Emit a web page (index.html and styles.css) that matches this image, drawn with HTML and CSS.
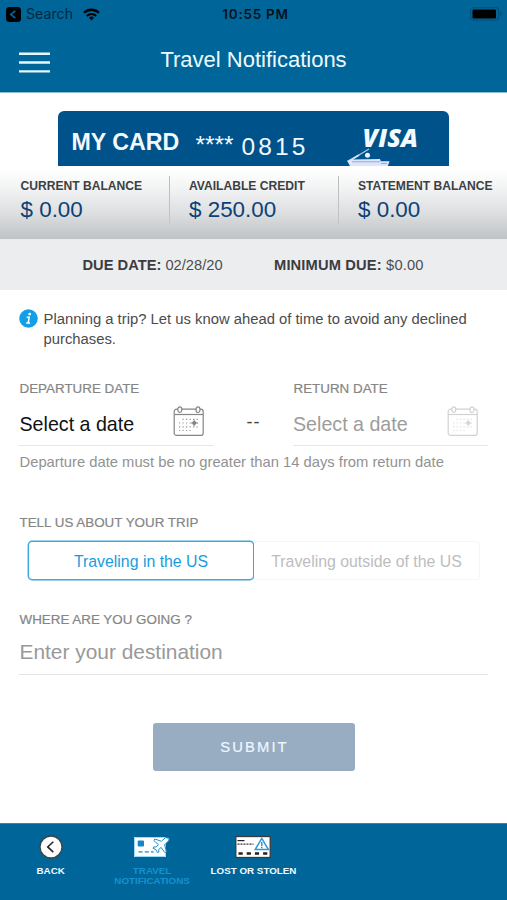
FILE: index.html
```html
<!DOCTYPE html>
<html lang="en">
<head>
<meta charset="utf-8">
<title>Travel Notifications</title>
<link rel="stylesheet" href="styles.css">
</head>
<body>
<div class="app">
  <header class="header">
    <div class="status">
      <div class="status-left">
        <svg width="15" height="15" viewBox="0 0 15 15"><rect width="15" height="15" rx="3.5" fill="#000"/><path d="M9.3 3.8 4.8 7.5l4.5 3.7" fill="none" stroke="#0a6298" stroke-width="1.7"/></svg>
        <span class="search">Search</span>
        <svg width="17" height="13" viewBox="0 0 17 13" fill="none" stroke="#000"><path d="M1 4.8a10.7 10.7 0 0 1 15 0" stroke-width="2.3"/><path d="M3.8 7.9a6.7 6.7 0 0 1 9.4 0" stroke-width="2.1"/><path d="m8.5 12.4 2.5-2.6a3.5 3.5 0 0 0-5 0z" fill="#000" stroke="none"/></svg>
      </div>
      <span class="time">10:55 PM</span>
      <svg class="battery" width="32" height="14" viewBox="0 0 32 14"><rect x=".6" y=".6" width="28" height="12.6" rx="3" fill="none" stroke="#04507d" stroke-width="1.2"/><rect x="2.5" y="2.6" width="23.5" height="8.8" rx="1.2" fill="#000"/><path d="M30 4.5c2 .8 2 4.2 0 5z" fill="#04507d"/></svg>
    </div>
    <div class="nav">
      <svg class="menu" width="31" height="22" viewBox="0 0 31 22" stroke="#e6f8ff" stroke-width="2.4"><path d="M0 1.8h31M0 10.5h31M0 19.4h31"/></svg>
      <h1 class="title">Travel Notifications</h1>
    </div>
  </header>

  <section class="card-area">
    <div class="card">
      <span class="card-name">MY CARD</span>
      <span class="card-mask">****</span>
      <span class="card-digits">0815</span>
      <div class="card-brand">
        <span class="visa">VISA</span>
        <svg class="boat" width="46" height="19" viewBox="0 0 46 19"><path d="m2 14 20-12" stroke="#a9cce9" stroke-width="1.3"/><path d="m2 14 10-6" stroke="#d5e5f5" stroke-width="1.8"/><circle cx="20.5" cy="8.3" r="2.5" fill="#eef5ff"/><path d="M0 13.8 3 12.4l30-.3.8 2.2h8.8l-1.8 4.7H3z" fill="#dce5fb"/><path d="M5 14.8h28M34 16.5h6" stroke="#8caed6"/></svg>
      </div>
    </div>
  </section>

  <section class="balances">
    <div class="balance"><div class="balance-label">CURRENT BALANCE</div><div class="amount">$ 0.00</div></div>
    <div class="balance"><div class="balance-label">AVAILABLE CREDIT</div><div class="amount">$ 250.00</div></div>
    <div class="balance"><div class="balance-label">STATEMENT BALANCE</div><div class="amount">$ 0.00</div></div>
  </section>
  <section class="due">
    <div class="due-date"><b>DUE DATE:</b> 02/28/20</div>
    <div class="due-min"><b>MINIMUM DUE:</b> $0.00</div>
  </section>

  <main class="form">
    <div class="info">
      <svg width="19" height="19" viewBox="0 0 19 19"><circle cx="9.5" cy="9.5" r="9.3" fill="#139fe5"/><g transform="translate(1.3)"><circle cx="9.4" cy="5.1" r="1.4" fill="#fff"/><path d="M6.4 8.2h2.5l-1 5.7h1.9M5.9 13.9h2.6" fill="none" stroke="#fff" stroke-width="1.5"/></g></svg>
      <p class="info-text">Planning a trip? Let us know ahead of time to avoid any declined purchases.</p>
    </div>

    <div class="dates">
      <div class="field">
        <div class="label">DEPARTURE DATE</div>
        <div class="control">
          <span class="value">Select a date</span>
          <svg class="calendar" width="32" height="31" viewBox="0 0 32 31"><g fill="none" stroke="#858585" stroke-width="1.2"><rect x="1.2" y="3.2" width="29" height="26.2" rx="2.5"/><path d="M1.2 8.5h29"/><ellipse cx="6.8" cy="3.7" rx="2" ry="2.8" fill="#fff"/><ellipse cx="25" cy="3.7" rx="2" ry="2.8" fill="#fff"/></g><g stroke="#999" stroke-width="1.2" stroke-dasharray="1.2 2.3"><path d="M9.5 13.3h17M6 17h20M6 20.8h20M6 24.5h14"/></g><circle cx="21.2" cy="17" r="2" fill="#777"/><path d="M17.8 17h7M21.2 13.5v7" stroke="#888"/></svg>
        </div>
      </div>
      <div class="dash">--</div>
      <div class="field">
        <div class="label">RETURN DATE</div>
        <div class="control">
          <span class="value value-empty">Select a date</span>
          <svg class="calendar" width="32" height="31" viewBox="0 0 32 31"><g fill="none" stroke="#d2d2d2" stroke-width="1.2"><rect x="1.2" y="3.2" width="29" height="26.2" rx="2.5"/><path d="M1.2 8.5h29"/><ellipse cx="6.8" cy="3.7" rx="2" ry="2.8" fill="#fff"/><ellipse cx="25" cy="3.7" rx="2" ry="2.8" fill="#fff"/></g><g stroke="#ddd" stroke-width="1.2" stroke-dasharray="1.2 2.3"><path d="M9.5 13.3h17M6 17h20M6 20.8h20M6 24.5h14"/></g><circle cx="21.2" cy="17" r="2" fill="#c9c9c9"/><path d="M17.8 17h7M21.2 13.5v7" stroke="#ddd"/></svg>
        </div>
      </div>
    </div>
    <p class="hint">Departure date must be no greater than 14 days from return date</p>

    <div class="label label-trip">TELL US ABOUT YOUR TRIP</div>
    <div class="segments">
      <button class="segment segment-on">Traveling in the US</button>
      <button class="segment segment-off">Traveling outside of the US</button>
    </div>

    <div class="label label-where">WHERE ARE YOU GOING ?</div>
    <div class="destination">Enter your destination</div>

    <button class="submit">SUBMIT</button>
  </main>

  <footer class="tabs">
    <div class="tab">
      <svg width="24" height="24" viewBox="0 0 24 24"><circle cx="12" cy="12" r="11" fill="#fff" stroke="#3c4348" stroke-width="1.3"/><path d="m14.3 6.7-5.6 5.2 5.6 5.2" fill="none" stroke="#222" stroke-width="1.5"/></svg>
      <span class="tab-text">BACK</span>
    </div>
    <div class="tab tab-active">
      <svg class="travel-icon" width="36" height="24" viewBox="0 0 36 24"><rect y="2" width="32" height="20" fill="#fff"/><path d="M.5 2.5h31v19H.5z" fill="none" stroke="#9bdcfa"/><rect x="3.7" y="5.5" width="6.3" height="6" rx="1" fill="#1687c6"/><path d="M4.5 16.8h15" stroke="#57a9d3" stroke-width="1.8" stroke-dasharray="4 2.3"/><path d="m35.3 3.2-.7 2.6-4 4 1.8 7-1.6.8-3.7-5.2-2.4 2.2.1 2.4-1.3.7-1.5-3-3-1.5.8-1.3 2.4.1 2.2-2.4-4.5-4 1-1.6 6.4 2.3 4.1-3.6z" fill="#fff" stroke="#1c8fcb" stroke-width="1"/></svg>
      <span class="tab-text">TRAVEL<br>NOTIFICATIONS</span>
    </div>
    <div class="tab">
      <svg width="36" height="24" viewBox="0 0 36 24"><rect x=".8" y="1.5" width="34.4" height="21" fill="#fff" stroke="#353b40" stroke-width="1.3"/><path d="M2.5 5.6h7" stroke="#222" stroke-width="1.2"/><path d="M2.5 9.2h16" stroke="#333" stroke-width="1.2" stroke-dasharray="2 1"/><path d="M3.5 18.5h30" stroke="#222" stroke-width="2.4" stroke-dasharray="4.2 4"/><path d="m26.8 3.4-6.6 11.1h13.2z" fill="#fff" stroke="#2a9cda" stroke-width="1.5"/><path d="M26.8 7v4.3M26.8 12v1.3" stroke="#287bb0" stroke-width="1.3"/></svg>
      <span class="tab-text">LOST OR STOLEN</span>
    </div>
  </footer>
</div>
</body>
</html>
```
FILE: styles.css
```css
* { box-sizing: border-box; }
body, h1, p { margin: 0; }
body { font-family: "Liberation Sans", Arial, sans-serif; background: #fff; color: #444; }
svg { display: block; flex: none; }
button { font-family: inherit; margin: 0; padding: 0; }

.app { width: 507px; height: 900px; display: flex; flex-direction: column; overflow: hidden; white-space: nowrap; }
.app > * { flex: none; }

.header { height: 93px; background: #006699; border-bottom: 1px solid #8ebdd4; }
.status { height: 28px; display: grid; grid-template-columns: 1fr auto 1fr; align-items: center; padding: 0 5px 0 6px; font-family: Inter, sans-serif; color: #05131c; }
.status-left { display: flex; align-items: center; }
.search { font-size: 14px; line-height: 28px; margin: 0 10px 0 5px; color: #02283e; letter-spacing: .1px; }
.time { font-size: 13.5px; font-weight: 600; letter-spacing: .75px; padding-left: 3px; }
.battery { justify-self: end; }
.nav { height: 64px; display: grid; grid-template-columns: 50px 1fr 50px; align-items: center; }
.menu { margin: 6px 0 0 19px; }
.title { font-size: 22px; font-weight: 400; line-height: 64px; text-align: center; color: #eefaff; }

.card-area { height: 77px; padding: 18px 58px 0; }
.card { height: 55px; width: 391px; border-radius: 6px 6px 0 0; background: #00528a; color: #f2f9ff; display: flex; overflow: hidden; padding-left: 13.5px; }
.card-name { width: 124px; font-size: 23.2px; font-weight: 700; line-height: 62px; }
.card-mask { width: 46px; font-size: 24.5px; line-height: 68px; }
.card-digits { width: 104px; font-size: 24.5px; line-height: 71px; letter-spacing: 3.1px; }
.card-brand { width: 80px; }
.visa { display: block; height: 36px; padding-left: 17px; font-family: "Open Sans", sans-serif; font-size: 25px; font-weight: 800; font-style: italic; line-height: 53px; letter-spacing: .2px; }
.boat { margin-left: 1px; }

.balances { height: 69px; display: grid; grid-template-columns: repeat(3, 1fr); background: linear-gradient(#fff, #f0f1f2 30%, #dddfe0 62%, #bfc3c5); }
.balance { padding: 8px 0 0 20px; background: linear-gradient(#bbb, #c5c6c8) left 6px / 1px 48px no-repeat; }
.balance:first-child { background: none; padding-left: 20.5px; }
.balance-label { height: 16px; font-size: 12.1px; font-weight: 700; line-height: 17px; color: #3d3f42; }
.amount { font-size: 22.4px; line-height: 31px; color: #0c4177; }

.due { height: 51px; background: #ecedef; display: flex; font-size: 14.7px; line-height: 52px; color: #4c4d4f; padding-left: 82.5px; }
.due b { color: #3b3c3f; }
.due-date { width: 191.5px; }
.due-min { letter-spacing: .15px; }

.form { height: 533px; padding: 19px 19px 0; display: flex; flex-direction: column; }
.info { display: flex; gap: 5.5px; height: 59px; }
.info-text { width: 435px; white-space: normal; font-size: 14.82px; line-height: 20px; color: #4b4b4b; }
.label { height: 20px; font-size: 13.4px; line-height: 21px; color: #858585; -webkit-text-stroke: .2px #858585; padding-left: .5px; }
.dates { display: flex; margin-top: 10px; height: 68px; }
.field { width: 195px; }
.control { height: 48px; display: flex; justify-content: space-between; align-items: center; padding-right: 9px; border-bottom: 1px solid #e6e6e6; }
.value { font-size: 19.65px; color: #111; padding: 5px 0 0 .5px; }
.value-empty { color: #9c9c9c; padding-left: 0; }
.dash { width: 79px; padding: 24px 0 0; text-align: center; font-size: 18px; line-height: 40px; letter-spacing: 1px; color: #444; }
.hint { height: 30px; padding-left: .5px; font-size: 14.77px; line-height: 32px; color: #929292; }

.label-trip { margin-top: 36px; }
.segments { display: flex; margin: 9px 0 0 9px; height: 39px; }
.segment { background: #fff; font-size: 15.85px; line-height: 38px; padding-top: 1px; }
.segment-on { width: 226px; border: 1.5px solid #39a8de; border-radius: 4px; color: #199cdd; box-shadow: 0 0 0 .4px #39a8de; }
.segment-off { width: 226px; border: 1px solid #f6f6f6; border-left: 0; border-radius: 4px; color: #bdbdbd; }
.label-where { margin-top: 29px; }
.destination { height: 46px; padding-left: .5px; font-size: 20.9px; line-height: 45px; color: #999; border-bottom: 1px solid #e4e4e4; }
.submit { align-self: center; width: 202px; height: 48px; margin-top: 48px; border: 0; border-radius: 3px; background: #98acc2; color: #eef8ff; font-size: 14.8px; letter-spacing: 2.1px; padding-left: 2px; -webkit-text-stroke: .2px #eef8ff; }

.tabs { height: 77px; background: #006699; display: grid; grid-template-columns: repeat(5, 1fr); border-top: 1px solid #3385ad; color: #f2faff; }
.tab { display: flex; flex-direction: column; align-items: center; padding-top: 11px; }
.tab-text { margin-top: 7px; font-size: 9.8px; font-weight: 700; line-height: 10px; text-align: center; }
.tab-active .tab-text { color: #1591d0; }
```
